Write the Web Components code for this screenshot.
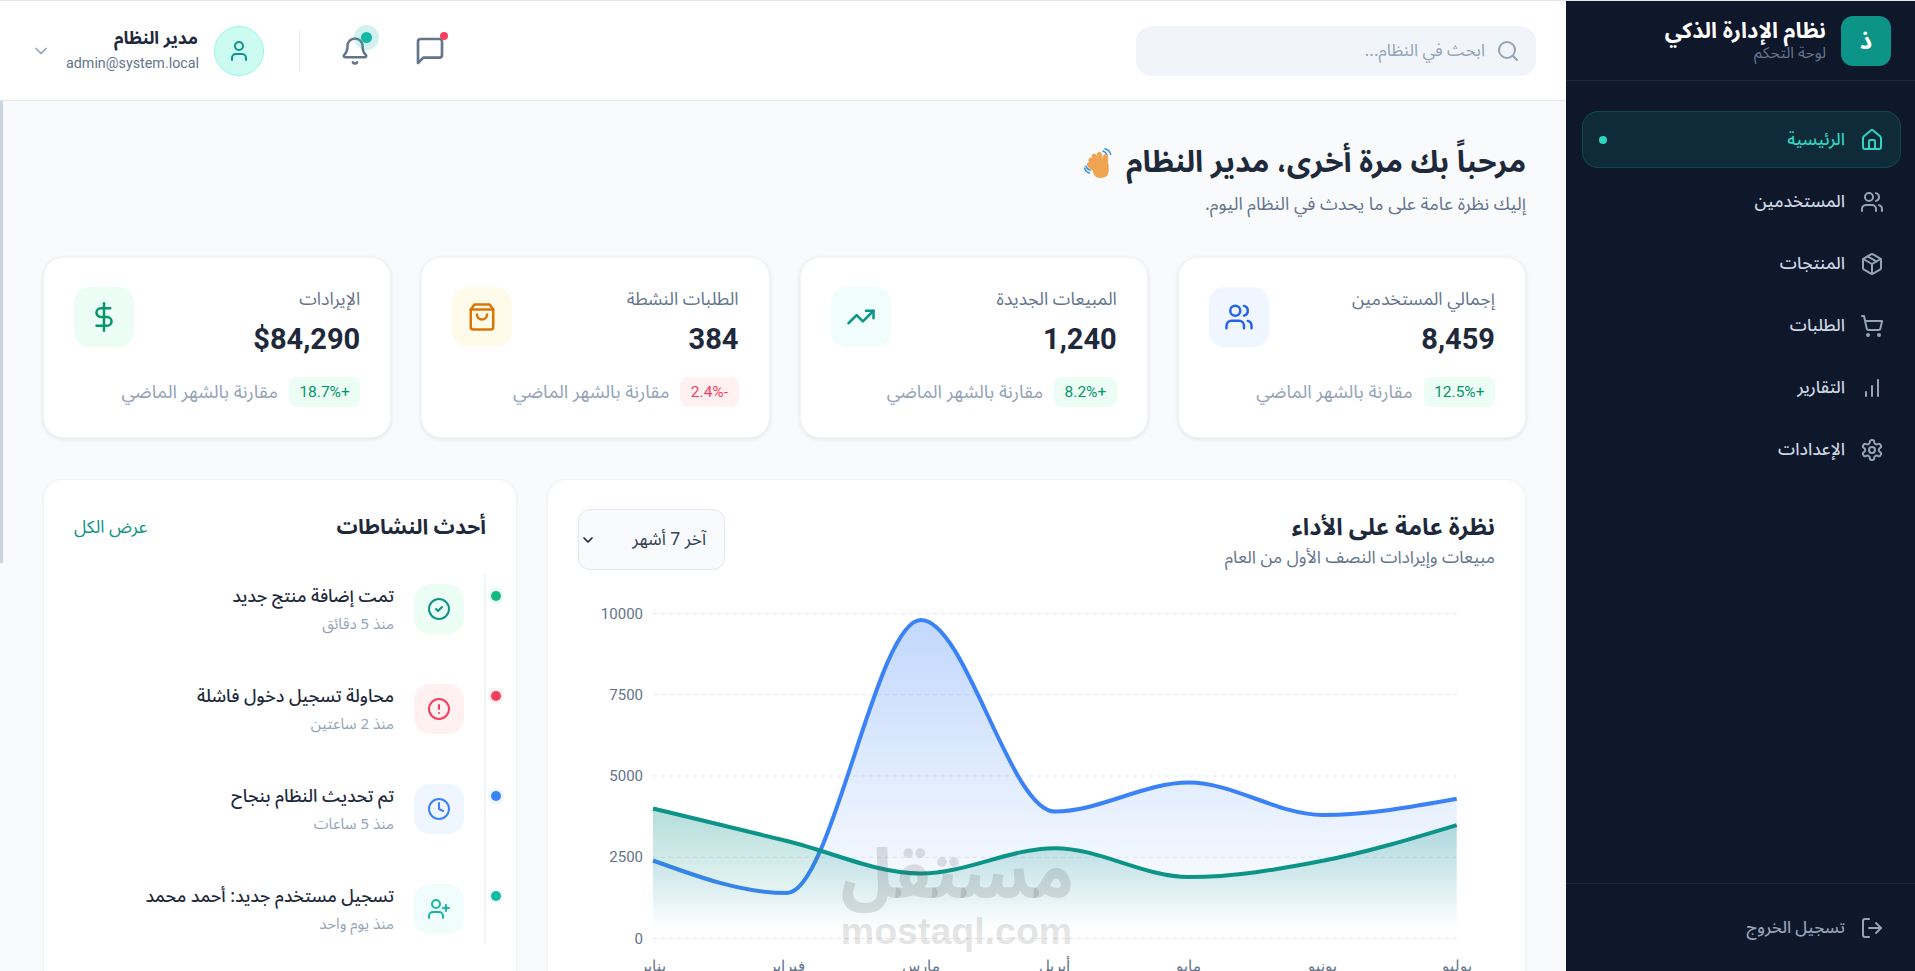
<!DOCTYPE html>
<html lang="ar" dir="rtl">
<head>
<meta charset="utf-8">
<title>نظام الإدارة الذكي</title>
<style>
html,body{margin:0;padding:0;height:971px;overflow:hidden;background:#f8fafc}
body{box-sizing:border-box;border-top:1px solid #e5e7eb;font-family:"Noto Sans Arabic","Noto Sans",Roboto,"DejaVu Sans",sans-serif;color:#1e293b}
</style>
</head>
<body>
<app-shell>
  <side-bar slot="side">
    <span slot="title">نظام الإدارة الذكي</span>
    <span slot="sub">لوحة التحكم</span>
    <nav-item icon="house" active>الرئيسية</nav-item>
    <nav-item icon="users">المستخدمين</nav-item>
    <nav-item icon="package">المنتجات</nav-item>
    <nav-item icon="cart">الطلبات</nav-item>
    <nav-item icon="bars">التقارير</nav-item>
    <nav-item icon="settings">الإعدادات</nav-item>
    <nav-item slot="foot" icon="logout" muted>تسجيل الخروج</nav-item>
  </side-bar>
  <top-bar slot="top"></top-bar>
  <welcome-block>
    <span slot="title">مرحباً بك مرة أخرى، مدير النظام</span>
    <span slot="sub">إليك نظرة عامة على ما يحدث في النظام اليوم.</span>
  </welcome-block>
  <stat-grid>
    <stat-card icon="users" tone="blue" trend="up"><span slot="label">إجمالي المستخدمين</span><span slot="value">8,459</span><span slot="delta">+12.5%</span></stat-card>
    <stat-card icon="trend" tone="teal" trend="up"><span slot="label">المبيعات الجديدة</span><span slot="value">1,240</span><span slot="delta">+8.2%</span></stat-card>
    <stat-card icon="bag" tone="amber" trend="down"><span slot="label">الطلبات النشطة</span><span slot="value">384</span><span slot="delta">-2.4%</span></stat-card>
    <stat-card icon="dollar" tone="green" trend="up"><span slot="label">الإيرادات</span><span slot="value">$84,290</span><span slot="delta">+18.7%</span></stat-card>
  </stat-grid>
  <lower-grid>
    <chart-card></chart-card>
    <activity-card>
      <activity-item icon="check" tone="green"><span slot="title">تمت إضافة منتج جديد</span><span slot="time">منذ 5 دقائق</span></activity-item>
      <activity-item icon="alert" tone="red"><span slot="title">محاولة تسجيل دخول فاشلة</span><span slot="time">منذ 2 ساعتين</span></activity-item>
      <activity-item icon="clock" tone="blue"><span slot="title">تم تحديث النظام بنجاح</span><span slot="time">منذ 5 ساعات</span></activity-item>
      <activity-item icon="userplus" tone="teal"><span slot="title">تسجيل مستخدم جديد: أحمد محمد</span><span slot="time">منذ يوم واحد</span></activity-item>
    </activity-card>
  </lower-grid>
</app-shell>
<script>
const ICONS={
house:'<path d="M15 21v-8a1 1 0 0 0-1-1h-4a1 1 0 0 0-1 1v8"/><path d="M3 10a2 2 0 0 1 .709-1.528l7-5.999a2 2 0 0 1 2.582 0l7 5.999A2 2 0 0 1 21 10v9a2 2 0 0 1-2 2H5a2 2 0 0 1-2-2z"/>',
users:'<path d="M16 21v-2a4 4 0 0 0-4-4H6a4 4 0 0 0-4 4v2"/><circle cx="9" cy="7" r="4"/><path d="M22 21v-2a4 4 0 0 0-3-3.87"/><path d="M16 3.13a4 4 0 0 1 0 7.75"/>',
package:'<path d="M11 21.73a2 2 0 0 0 2 0l7-4A2 2 0 0 0 21 16V8a2 2 0 0 0-1-1.73l-7-4a2 2 0 0 0-2 0l-7 4A2 2 0 0 0 3 8v8a2 2 0 0 0 1 1.73z"/><path d="M12 22V12"/><path d="m3.3 7 8.7 5 8.7-5"/><path d="m7.5 4.27 9 5.15"/>',
cart:'<circle cx="8" cy="21" r="1"/><circle cx="19" cy="21" r="1"/><path d="M2.05 2.05h2l2.66 12.42a2 2 0 0 0 2 1.58h9.78a2 2 0 0 0 1.95-1.57l1.65-7.43H5.12"/>',
bars:'<path d="M12 20V10"/><path d="M18 20V4"/><path d="M6 20v-4"/>',
settings:'<path d="M12.22 2h-.44a2 2 0 0 0-2 2v.18a2 2 0 0 1-1 1.73l-.43.25a2 2 0 0 1-2 0l-.15-.08a2 2 0 0 0-2.73.73l-.22.38a2 2 0 0 0 .73 2.73l.15.1a2 2 0 0 1 1 1.72v.51a2 2 0 0 1-1 1.74l-.15.09a2 2 0 0 0-.73 2.73l.22.38a2 2 0 0 0 2.73.73l.15-.08a2 2 0 0 1 2 0l.43.25a2 2 0 0 1 1 1.73V20a2 2 0 0 0 2 2h.44a2 2 0 0 0 2-2v-.18a2 2 0 0 1 1-1.73l.43-.25a2 2 0 0 1 2 0l.15.08a2 2 0 0 0 2.73-.73l.22-.39a2 2 0 0 0-.73-2.73l-.15-.08a2 2 0 0 1-1-1.74v-.5a2 2 0 0 1 1-1.74l.15-.09a2 2 0 0 0 .73-2.73l-.22-.38a2 2 0 0 0-2.73-.73l-.15.08a2 2 0 0 1-2 0l-.43-.25a2 2 0 0 1-1-1.73V4a2 2 0 0 0-2-2z"/><circle cx="12" cy="12" r="3"/>',
logout:'<path d="M9 21H5a2 2 0 0 1-2-2V5a2 2 0 0 1 2-2h4"/><polyline points="16 17 21 12 16 7"/><line x1="21" y1="12" x2="9" y2="12"/>',
search:'<circle cx="11" cy="11" r="8"/><path d="m21 21-4.3-4.3"/>',
bell:'<path d="M10.268 21a2 2 0 0 0 3.464 0"/><path d="M3.262 15.326A1 1 0 0 0 4 17h16a1 1 0 0 0 .74-1.673C19.41 13.956 18 12.499 18 8A6 6 0 0 0 6 8c0 4.499-1.411 5.956-2.738 7.326"/>',
chat:'<path d="M21 15a2 2 0 0 1-2 2H7l-4 4V5a2 2 0 0 1 2-2h14a2 2 0 0 1 2 2z"/>',
user:'<path d="M19 21v-2a4 4 0 0 0-4-4H9a4 4 0 0 0-4 4v2"/><circle cx="12" cy="7" r="4"/>',
chevron:'<path d="m6 9 6 6 6-6"/>',
trend:'<polyline points="22 7 13.5 15.5 8.5 10.5 2 17"/><polyline points="16 7 22 7 22 13"/>',
bag:'<path d="M6 2 3 6v14a2 2 0 0 0 2 2h14a2 2 0 0 0 2-2V6l-3-4Z"/><path d="M3 6h18"/><path d="M16 10a4 4 0 0 1-8 0"/>',
dollar:'<line x1="12" y1="1" x2="12" y2="23"/><path d="M17 5H9.5a3.5 3.5 0 0 0 0 7h5a3.5 3.5 0 0 1 0 7H6"/>',
check:'<circle cx="12" cy="12" r="10"/><path d="m9 12 2 2 4-4"/>',
alert:'<circle cx="12" cy="12" r="10"/><line x1="12" y1="8" x2="12" y2="12"/><line x1="12" y1="16" x2="12.01" y2="16"/>',
clock:'<circle cx="12" cy="12" r="10"/><polyline points="12 6 12 12 16 14"/>',
userplus:'<path d="M16 21v-2a4 4 0 0 0-4-4H6a4 4 0 0 0-4 4v2"/><circle cx="9" cy="7" r="4"/><line x1="19" y1="8" x2="19" y2="14"/><line x1="22" y1="11" x2="16" y2="11"/>'
};
const TONES={
 blue:['#eff6ff','#2563eb'],teal:['#f0fdfa','#0d9488'],amber:['#fffbeb','#d97706'],green:['#ecfdf5','#059669'],red:['#fff1f2','#e11d48']
};
function shell(el,html){el.attachShadow({mode:'open'}).innerHTML=html;}
function def(name,cls){customElements.define(name,cls);}

def('x-icon',class extends HTMLElement{
 connectedCallback(){
  const s=this.getAttribute('size')||24,w=this.getAttribute('stroke')||2;
  shell(this,`<style>:host{display:inline-flex;flex:none;width:${s}px;height:${s}px}svg{display:block}</style>
  <svg xmlns="http://www.w3.org/2000/svg" width="${s}" height="${s}" viewBox="0 0 24 24" fill="none" stroke="currentColor" stroke-width="${w}" stroke-linecap="round" stroke-linejoin="round">${ICONS[this.getAttribute('name')]||''}</svg>`);
 }
});

def('app-shell',class extends HTMLElement{
 constructor(){super();shell(this,`<style>
 :host{display:flex;height:970px;overflow:hidden}
 .col{flex:1;min-width:0;display:flex;flex-direction:column;position:relative}
 main{flex:1;min-height:0;overflow:hidden;padding:40px 40px 0 43px;box-sizing:border-box;display:flex;flex-direction:column}
 .thumb{position:absolute;left:0;top:100px;width:3px;height:462px;background:#cbd5e1}
 </style>
 <slot name="side"></slot>
 <div class="col"><slot name="top"></slot><main><slot></slot></main><div class="thumb"></div></div>`);}
});

def('side-bar',class extends HTMLElement{
 constructor(){super();shell(this,`<style>
 :host{display:flex;flex-direction:column;flex:none;width:349px;height:970px;background:#0f172a;box-sizing:border-box}
 header{height:80px;box-sizing:border-box;border-bottom:1px solid #1e293b;padding:15px 24px 0 0;display:flex;gap:15px;align-items:flex-start}
 .logo{width:50px;height:50px;border-radius:12px;background:#0d9488;color:#fff;font-weight:700;font-size:24px;display:flex;align-items:center;justify-content:center}
 .t{display:flex;flex-direction:column;padding-top:2px}
 .t1{font-size:21.8px;font-weight:700;color:#fff;line-height:26px}
 .t2{font-size:15.5px;color:#64748b;line-height:18px}
 nav{flex:1;padding:30px 14px 0 16px;display:flex;flex-direction:column;gap:5px}
 footer{height:88px;box-sizing:border-box;border-top:1px solid #1e293b;padding:15px 14px 0 16px}
 </style>
 <header><div class="logo">ذ</div><div class="t"><div class="t1"><slot name="title"></slot></div><div class="t2"><slot name="sub"></slot></div></div></header>
 <nav><slot></slot></nav>
 <footer><slot name="foot"></slot></footer>`);}
});

def('nav-item',class extends HTMLElement{
 connectedCallback(){
  const a=this.hasAttribute('active'),m=this.hasAttribute('muted');
  shell(this,`<style>
  :host{display:flex;align-items:center;gap:15px;height:57px;box-sizing:border-box;padding:0 16px;border-radius:16px;border:1px solid transparent;font-size:${m?'16.6':'17.2'}px;font-weight:500;color:${m?'#94a3b8':'#cbd5e1'}}
  :host([active]){background:rgba(20,184,166,.12);border-color:rgba(20,184,166,.2);color:#2dd4bf}
  x-icon{color:${a?'#2dd4bf':'#94a3b8'}}
  .sp{flex:1}
  .dot{width:8px;height:8px;border-radius:50%;background:#2dd4bf}
  </style><x-icon name="${this.getAttribute('icon')}"></x-icon><span><slot></slot></span><span class="sp"></span>${a?'<span class="dot"></span>':''}`);
 }
});

def('top-bar',class extends HTMLElement{
 constructor(){super();shell(this,`<style>
 :host{display:flex;flex:none;align-items:center;justify-content:space-between;height:100px;box-sizing:border-box;background:#fff;border-bottom:1px solid #e2e8f0;padding:0 30px 0 31px}
 .search{width:400px;height:50px;border-radius:16px;background:#f1f5f9;display:flex;align-items:center;gap:11px;padding:0 16px;box-sizing:border-box;color:#94a3b8;font-size:17px}
 .right{display:flex;align-items:center}
 .btn{position:relative;width:44px;height:44px;display:flex;align-items:center;justify-content:center;color:#64748b}
 .chat{margin-left:31px}
 .dot{position:absolute;border-radius:50%}
 .chat .dot{width:8px;height:8px;background:#f43f5e;top:3px;right:4px}
 .bell .dot{width:11px;height:11px;background:#14b8a6;top:3px;right:5px;box-shadow:0 0 0 7px rgba(20,184,166,.2)}
 .div{width:1px;height:40px;background:#e2e8f0;margin:0 33px 0 35px}
 .avatar{width:50px;height:50px;box-sizing:border-box;border-radius:50%;background:#ccfbf1;border:1px solid #99f6e4;color:#0d9488;display:flex;align-items:center;justify-content:center}
 .who{width:132px;margin:0 16px 0 15px;display:flex;flex-direction:column;font-size:14px;color:#64748b;line-height:24px}
 .name{font-size:17.5px;font-weight:700;color:#1e293b}
 .mail{font-family:Roboto,sans-serif;direction:ltr;text-align:right;font-size:14.3px}
 .chev{color:#94a3b8}
 </style>
 <div class="search"><x-icon name="search" size="24"></x-icon><span>ابحث في النظام...</span></div>
 <div class="right">
  <div class="btn chat"><x-icon name="chat" size="32"></x-icon><span class="dot"></span></div>
  <div class="btn bell"><x-icon name="bell" size="30"></x-icon><span class="dot"></span></div>
  <div class="div"></div>
  <div class="avatar"><x-icon name="user" size="24"></x-icon></div>
  <div class="who"><span class="name">مدير النظام</span><span class="mail">admin@system.local</span></div>
  <x-icon class="chev" name="chevron" size="20"></x-icon>
 </div>`);}
});

def('welcome-block',class extends HTMLElement{
 constructor(){super();shell(this,`<style>
 :host{display:block;height:116px;flex:none}
 h1{margin:0;font-size:29.8px;font-weight:700;line-height:44px;color:#1e293b;display:flex;align-items:center;gap:11px}
 p{margin:7px 0 0;font-size:18px;line-height:24px;color:#64748b}
 </style>
 <h1><span><slot name="title"></slot></span>
 <svg width="31" height="31" viewBox="0 0 31 31" aria-hidden="true"><g fill="none" stroke="#2f8ae0" stroke-width="1.4" stroke-linecap="round"><path d="M19 3c2 .6 3.4 2 4 4"/><path d="M21 0.8c3 .8 5 3 5.6 5.6"/><path d="M2 18c.5 2 2 3.6 4 4.2"/><path d="M.3 20c.8 2.600 2.700 4.300 5 5"/></g><g fill="#efa452"><rect x="6.500" y="9" width="5" height="13" rx="2.500" transform="rotate(-38 9 15)"/><rect x="9.500" y="5.500" width="5" height="14" rx="2.500" transform="rotate(-25 12 12)"/><rect x="14" y="4" width="5" height="15" rx="2.500" transform="rotate(-12 16 12)"/><rect x="19" y="6" width="5" height="14" rx="2.500" transform="rotate(0 21 13)"/><path d="M10 16c2-3 12-4 14-1 1 1 1 8 0 11-1 3-5 4-8 4-4 0-6-3-7-6-.5-2 0-5 1-8z"/><rect x="4" y="14" width="5" height="9" rx="2.500" transform="rotate(-40 6 18)"/></g></svg></h1>
 <p><slot name="sub"></slot></p>`);}
});

def('stat-grid',class extends HTMLElement{
 constructor(){super();shell(this,`<style>:host{display:grid;flex:none;grid-template-columns:repeat(4,1fr);gap:30px}</style><slot></slot>`);}
});

def('stat-card',class extends HTMLElement{
 connectedCallback(){
  const [bg,fg]=TONES[this.getAttribute('tone')];
  const down=this.getAttribute('trend')==='down';
  shell(this,`<style>
  :host{display:block;height:181px;box-sizing:border-box;background:#fff;border:1px solid #f1f5f9;border-radius:20px;padding:29px 30px;box-shadow:0 1px 4px rgba(15,23,42,.1)}
  .top{display:flex;justify-content:space-between;align-items:flex-start;height:71px}
  .label{font-size:17.8px;line-height:26px;color:#64748b}
  .value{font-size:29px;line-height:40px;margin-top:6px;font-weight:700;color:#1e293b;font-family:Roboto,sans-serif}
  .icon{width:60px;height:60px;border-radius:16px;background:${bg};color:${fg};display:flex;align-items:center;justify-content:center}
  .foot{display:flex;align-items:center;gap:11px;margin-top:19px;height:30px;font-size:18.4px;color:#94a3b8}
  .delta{height:30px;padding:0 10.5px;box-sizing:border-box;border-radius:8px;display:flex;align-items:center;font-size:15.5px;font-family:Roboto,sans-serif;background:${down?'#fff1f2':'#ecfdf5'};color:${down?'#f43f5e':'#059669'}}
  </style>
  <div class="top"><div><div class="label"><slot name="label"></slot></div><div class="value"><slot name="value"></slot></div></div>
  <div class="icon"><x-icon name="${this.getAttribute('icon')}" size="30"></x-icon></div></div>
  <div class="foot"><span class="delta"><slot name="delta"></slot></span><span>مقارنة بالشهر الماضي</span></div>`);
 }
});

def('lower-grid',class extends HTMLElement{
 constructor(){super();shell(this,`<style>:host{display:grid;flex:none;grid-template-columns:minmax(0,1fr) 474px;gap:30px;margin-top:41px;align-items:start}</style><slot></slot>`);}
});

function monotone(pts){
 const n=pts.length,t=new Array(n);
 const sign=x=>x<0?-1:1;
 for(let i=1;i<n-1;i++){
  const [x0,y0]=pts[i-1],[x1,y1]=pts[i],[x2,y2]=pts[i+1];
  const h0=x1-x0,h1=x2-x1,s0=(y1-y0)/h0,s1=(y2-y1)/h1,p=(s0*h1+s1*h0)/(h0+h1);
  t[i]=(sign(s0)+sign(s1))*Math.min(Math.abs(s0),Math.abs(s1),.5*Math.abs(p))||0;
 }
 const h=pts[1][0]-pts[0][0];
 t[0]=(3*(pts[1][1]-pts[0][1])/h-t[1])/2;
 t[n-1]=(3*(pts[n-1][1]-pts[n-2][1])/h-t[n-2])/2;
 let d=`M${pts[0][0]},${pts[0][1]}`;
 for(let i=0;i<n-1;i++){
  const dx=(pts[i+1][0]-pts[i][0])/3;
  d+=`C${pts[i][0]+dx},${pts[i][1]+dx*t[i]},${pts[i+1][0]-dx},${pts[i+1][1]-dx*t[i+1]},${pts[i+1][0]},${pts[i+1][1]}`;
 }
 return d;
}

def('chart-card',class extends HTMLElement{
 constructor(){super();
  const X0=75,X1=878.7,Y0=13.5,Y1=338.5;
  const px=i=>X0+(X1-X0)*i/6,py=v=>Y1-(Y1-Y0)*v/10000;
  const blue=[2400,1398,9800,3908,4800,3800,4300].map((v,i)=>[px(i),py(v)]);
  const green=[4000,3000,2000,2780,1890,2390,3490].map((v,i)=>[px(i),py(v)]);
  const months=['يناير','فبراير','مارس','أبريل','مايو','يونيو','يوليو'];
  const bd=monotone(blue),gd=monotone(green);
  const area=d=>`${d}L${X1},${Y1}L${X0},${Y1}Z`;
  const grid=[0,2500,5000,7500,10000].map(v=>`<line x1="${X0}" x2="${X1}" y1="${py(v)}" y2="${py(v)}" stroke="#e2e8f0" stroke-dasharray="4 4"/><text x="65" y="${py(v)+5}" text-anchor="end" direction="ltr" class="ax">${v}</text>`).join('');
  const xl=months.map((m,i)=>`<text x="${px(i)}" y="371" text-anchor="middle" class="ax">${m}</text>`).join('');
  shell(this,`<style>
  :host{display:block;position:relative;height:520px;box-sizing:border-box;background:#fff;border:1px solid #f1f5f9;border-radius:20px;padding:29px 30px 0 30px;box-shadow:0 1px 3px rgba(15,23,42,.05)}
  .head{display:flex;justify-content:space-between;align-items:flex-start;height:61px}
  h3{margin:3px 0 0;font-size:23.6px;font-weight:700;line-height:32px;color:#1e293b}
  p{margin:2px 0 0;font-size:17.4px;line-height:24px;color:#64748b}
  .sel{width:147px;height:61px;box-sizing:border-box;border:1px solid #e2e8f0;border-radius:12px;background:#f8fafc;color:#334155;font-size:17.4px;display:flex;align-items:center;justify-content:space-between;padding:0 18px 0 1px}
  .sel x-icon{color:#1e293b}
  svg{display:block;margin-top:30px;direction:ltr}
  .ax{font-size:15px;fill:#64748b;font-family:Roboto,"Noto Sans",sans-serif}
  .wm{position:absolute;left:294px;top:362px;width:232px;color:rgba(90,90,90,.18);text-align:center;pointer-events:none;overflow:visible}
  .wm b{display:block;font-size:68px;line-height:70px;font-weight:800}
  .wm i{display:block;font:700 37.5px/38px "Liberation Sans",sans-serif;font-style:normal;direction:ltr;margin-left:-3px}
  </style>
  <div class="head"><div><h3>نظرة عامة على الأداء</h3><p>مبيعات وإيرادات النصف الأول من العام</p></div>
  <div class="sel"><span>آخر 7 أشهر</span><x-icon name="chevron" size="16" stroke="2.600"></x-icon></div></div>
  <svg width="917" height="400" viewBox="0 0 917 400">
   <defs>
    <linearGradient id="gb" x1="0" y1="0" x2="0" y2="1"><stop offset="5%" stop-color="#3b82f6" stop-opacity=".3"/><stop offset="95%" stop-color="#3b82f6" stop-opacity="0"/></linearGradient>
    <linearGradient id="gg" x1="0" y1="0" x2="0" y2="1"><stop offset="5%" stop-color="#0d9488" stop-opacity=".3"/><stop offset="95%" stop-color="#0d9488" stop-opacity="0"/></linearGradient>
   </defs>
   ${grid}
   <path d="${area(bd)}" fill="url(#gb)"/><path d="${bd}" fill="none" stroke="#3b82f6" stroke-width="4"/>
   <path d="${area(gd)}" fill="url(#gg)"/><path d="${gd}" fill="none" stroke="#0d9488" stroke-width="4"/>
   ${xl}
  </svg>
  <div class="wm"><b>مستقل</b><i>mostaql.com</i></div>`);
 }
});

def('activity-card',class extends HTMLElement{
 constructor(){super();shell(this,`<style>
 :host{display:block;height:520px;box-sizing:border-box;background:#fff;border:1px solid #f1f5f9;border-radius:20px;padding:29px 30px 0 30px;box-shadow:0 1px 3px rgba(15,23,42,.05)}
 .head{display:flex;justify-content:space-between;align-items:center;height:36px}
 h3{margin:0;font-size:21px;font-weight:700;color:#1e293b}
 a{font-size:17.6px;color:#0d9488}
 .list{margin-top:29px;border-right:2px solid #f1f5f9;padding:10px 20px 10px 0;display:flex;flex-direction:column;gap:50px}
 </style>
 <div class="head"><h3>أحدث النشاطات</h3><a>عرض الكل</a></div>
 <div class="list"><slot></slot></div>`);}
});

def('activity-item',class extends HTMLElement{
 connectedCallback(){
  const [bg]=TONES[this.getAttribute('tone')];
  const dot={green:'#10b981',red:'#f43f5e',blue:'#3b82f6',teal:'#14b8a6'}[this.getAttribute('tone')];
  const ic={green:'#0d9488',red:'#f43f5e',blue:'#3b82f6',teal:'#14b8a6'}[this.getAttribute('tone')];
  shell(this,`<style>
  :host{display:flex;gap:20px;height:50px;position:relative}
  .icon{width:50px;height:50px;flex:none;border-radius:16px;background:${bg};color:${ic};display:flex;align-items:center;justify-content:center}
  .title{font-size:17.6px;font-weight:500;line-height:26px;color:#1e293b}
  .time{font-size:15px;line-height:22px;color:#94a3b8;margin-top:3px}
  .dot{position:absolute;top:7px;right:-37px;width:10px;height:10px;border-radius:50%;background:${dot};box-shadow:0 0 0 3px ${bg}}
  </style>
  <span class="dot"></span><div class="icon"><x-icon name="${this.getAttribute('icon')}" size="24"></x-icon></div>
  <div><div class="title"><slot name="title"></slot></div><div class="time"><slot name="time"></slot></div></div>`);
 }
});
</script>
</body>
</html>
